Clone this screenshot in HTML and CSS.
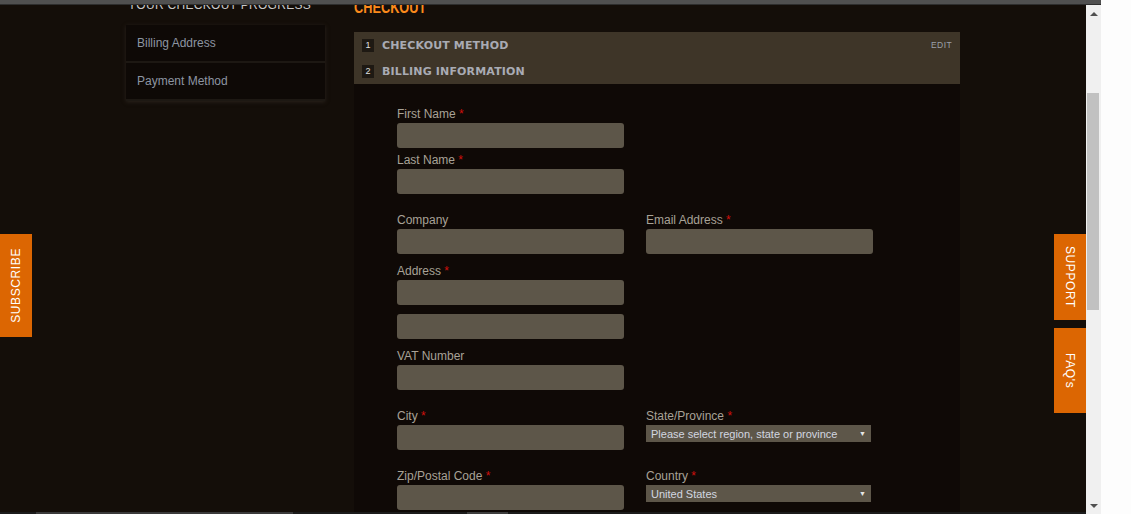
FILE: index.html
```html
<!DOCTYPE html>
<html lang="en">
<head>
<meta charset="utf-8">
<title>Checkout</title>
<link rel="stylesheet" href="styles.css">
</head>
<body>
<div class="topbar"></div>
<div class="frame">
  <div class="page">
    <div class="container">
      <aside class="sidebar">
        <h2 class="side-title">YOUR CHECKOUT PROGRESS</h2>
        <ul class="progress">
          <li>Billing Address</li>
          <li>Payment Method</li>
        </ul>
      </aside>
      <main class="main">
        <h1 class="page-title"><span>CHECKOUT</span></h1>
        <div class="steps">
          <div class="step"><span class="num">1</span><span class="step-name">CHECKOUT METHOD</span><a class="edit">EDIT</a></div>
          <div class="step"><span class="num">2</span><span class="step-name">BILLING INFORMATION</span></div>
        </div>
        <form class="form">
          <div class="field">
            <label>First Name <span class="req">*</span></label>
            <input class="input" type="text">
          </div>
          <div class="field gap-s">
            <label>Last Name <span class="req">*</span></label>
            <input class="input" type="text">
          </div>
          <div class="row gap-l">
            <div class="field">
              <label>Company</label>
              <input class="input" type="text">
            </div>
            <div class="field">
              <label>Email Address <span class="req">*</span></label>
              <input class="input" type="text">
            </div>
          </div>
          <div class="field gap-m">
            <label>Address <span class="req">*</span></label>
            <input class="input" type="text">
            <input class="input gap-m" type="text">
          </div>
          <div class="field gap-m">
            <label>VAT Number</label>
            <input class="input" type="text">
          </div>
          <div class="row gap-l">
            <div class="field">
              <label>City <span class="req">*</span></label>
              <input class="input" type="text">
            </div>
            <div class="field">
              <label>State/Province <span class="req">*</span></label>
              <div class="select"><span>Please select region, state or province</span><span class="caret">&#9660;</span></div>
            </div>
          </div>
          <div class="row gap-l">
            <div class="field">
              <label>Zip/Postal Code <span class="req">*</span></label>
              <input class="input" type="text">
            </div>
            <div class="field">
              <label>Country <span class="req">*</span></label>
              <div class="select"><span>United States</span><span class="caret">&#9660;</span></div>
            </div>
          </div>
        </form>
      </main>
    </div>
    <a class="tab tab-subscribe"><span>SUBSCRIBE</span></a>
    <div class="tabs-right">
      <a class="tab tab-support"><span>SUPPORT</span></a>
      <a class="tab tab-faq"><span>FAQ's</span></a>
    </div>
    <div class="hstrip"></div>
  </div>
  <div class="vscroll">
    <div class="arrow-btn"><span class="tri-up"></span></div>
    <div class="track"><div class="thumb"></div></div>
    <div class="arrow-btn"><span class="tri-down"></span></div>
  </div>
  <div class="blank"></div>
</div>
</body>
</html>
```
FILE: styles.css
```css
* { box-sizing: border-box; }

body {
  margin: 0;
  background: #fdfdfd;
  overflow: hidden;
  font-family: "Liberation Sans", Arial, sans-serif;
}

.topbar {
  width: 1101px;
  height: 5px;
  background: #505050;
  border-bottom: 1px solid #2e2e2e;
}

.frame {
  display: flex;
  height: 509px;
}

.page {
  position: relative;
  width: 1086px;
  height: 509px;
  flex: none;
  background: #140e09;
  overflow: hidden;
}

.container {
  width: 836px;
  margin: 0 auto;
  display: flex;
  gap: 27px;
  height: 100%;
}

/* sidebar */
.sidebar {
  width: 202px;
  flex: none;
  padding: 0 2px 0 1px;
}

.side-title {
  margin: -8px 0 12px 2px;
  height: 16px;
  font-size: 12px;
  line-height: 16px;
  font-weight: normal;
  color: #c9c9c9;
  letter-spacing: 0.3px;
  white-space: nowrap;
}

.progress {
  list-style: none;
  margin: 0;
  padding: 0;
  box-shadow: 0 1px 4px rgba(45, 38, 31, 0.9);
}

.progress li {
  height: 38px;
  line-height: 36px;
  padding-left: 11px;
  background: #0e0906;
  border-bottom: 2px solid #1d1813;
  font-size: 12px;
  color: #8d95a2;
}

/* main */
.main {
  width: 606px;
  flex: none;
  display: flex;
  flex-direction: column;
}

.page-title {
  margin: -7px 0 14px;
  height: 20px;
  font-size: 17px;
  line-height: 20px;
  font-weight: bold;
  color: #fb8a1c;
}

.page-title span {
  display: inline-block;
  transform: scaleX(0.75);
  transform-origin: 0 50%;
}

.steps {
  background: #3e3528;
  padding: 0 8px;
}

.step {
  height: 26px;
  display: flex;
  align-items: center;
}

.num {
  width: 12px;
  height: 13px;
  margin-right: 8px;
  background: #1e1913;
  color: #e0e0e0;
  font-size: 9px;
  line-height: 13px;
  text-align: center;
}

.step-name {
  font-family: "DejaVu Sans", sans-serif;
  font-weight: bold;
  font-size: 11px;
  letter-spacing: 0.15px;
  color: #a9abb4;
}

.edit {
  margin-left: auto;
  font-size: 8.5px;
  letter-spacing: 0.4px;
  color: #9ba0a8;
}

/* form */
.form {
  flex: 1;
  background: #0f0906;
  padding: 22px 0 0 43px;
}

.field label {
  display: block;
  height: 16px;
  margin-bottom: 1px;
  font-size: 12px;
  line-height: 16px;
  color: #a8a297;
}

.req { color: #d0100c; }

.input {
  display: block;
  width: 227px;
  height: 25px;
  margin: 0;
  padding: 0 6px;
  background: #5d5649;
  border: 0;
  border-radius: 3px;
  outline: none;
}

.row {
  display: grid;
  grid-template-columns: 227px 227px;
  column-gap: 22px;
}

.gap-s { margin-top: 4px; }
.gap-m { margin-top: 9px; }
.gap-l { margin-top: 18px; }

.select {
  display: flex;
  align-items: center;
  width: 225px;
  height: 17px;
  margin-top: 1px;
  padding: 0 5px;
  background: #5d5649;
  font-size: 11px;
  color: #d3d6e0;
  white-space: nowrap;
}

.caret {
  margin-left: auto;
  font-size: 7px;
  color: #e6e6e6;
}

/* side tabs */
.tab {
  display: flex;
  align-items: center;
  justify-content: center;
  width: 32px;
  background: #dc6602;
  color: #fff;
  font-size: 12px;
  letter-spacing: 0.6px;
  text-decoration: none;
}

.tab span { writing-mode: vertical-rl; }

.tab-subscribe {
  position: absolute;
  left: 0;
  top: 229px;
  height: 103px;
}

.tab-subscribe span { transform: rotate(180deg); }

.tabs-right {
  position: absolute;
  right: 0;
  top: 229px;
  display: flex;
  flex-direction: column;
  gap: 8px;
}

.tab-support { height: 86px; }
.tab-faq { height: 85px; }

.hstrip {
  position: absolute;
  left: 0;
  bottom: 0;
  width: 100%;
  height: 2px;
  background: linear-gradient(to right, #1b1b1b 0 36px, #3a3a3a 36px 293px, #1b1b1b 293px 467px, #3d3d3d 467px 508px, #1b1b1b 508px);
}

/* scrollbar */
.vscroll {
  width: 15px;
  height: 509px;
  flex: none;
  background: #f0f0f0;
  display: flex;
  flex-direction: column;
}

.arrow-btn {
  height: 17px;
  display: flex;
  align-items: center;
  justify-content: center;
}

.tri-up {
  width: 0;
  height: 0;
  border-left: 4px solid transparent;
  border-right: 4px solid transparent;
  border-bottom: 4px solid #505050;
}

.tri-down {
  width: 0;
  height: 0;
  border-left: 4px solid transparent;
  border-right: 4px solid transparent;
  border-top: 4px solid #505050;
}

.track { flex: 1; }

.thumb {
  width: 12px;
  height: 217px;
  margin: 71px 0 0 1px;
  background: #c1c1c1;
}

.blank {
  flex: 1;
  background: #fdfdfd;
}
```
